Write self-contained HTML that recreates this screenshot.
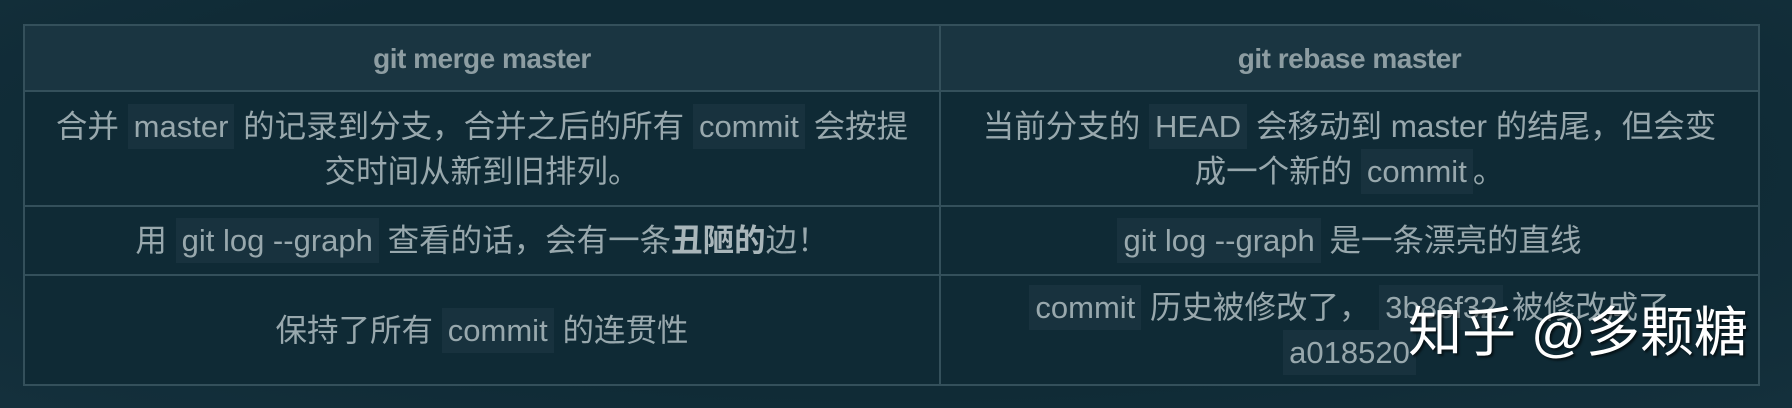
<!DOCTYPE html>
<html><head><meta charset="utf-8"><style>
html,body{margin:0;padding:0;}
body{width:1792px;height:408px;overflow:hidden;background:#102833;position:relative;
font-family:"Liberation Sans","Noto Sans CJK SC",sans-serif;color:#98a8ad;}
.bg{position:absolute;left:0;top:0;width:1792px;height:408px;
background:radial-gradient(ellipse at 50% 40%,#0f2a35 60%,#14303c 100%);}
table{position:absolute;left:23px;top:24px;border-collapse:collapse;table-layout:fixed;}
td,th{border:2px solid #34505b;text-align:center;padding:0 20px;font-size:31.5px;line-height:45px;}
th{background:#1a3541;height:64px;font-size:28px;font-weight:bold;color:#8d9da2;letter-spacing:-0.5px;}
td{background:#0f2a35;}
code{font-family:"Liberation Sans",sans-serif;background:#18323e;padding:5px 6px;font-size:31px;}
b{color:#a9b6ba;}
.wm{position:absolute;left:1408px;top:288px;font-size:54px;color:#fff;font-family:"Liberation Sans","Noto Sans CJK SC",sans-serif;font-weight:400;text-shadow:2px 2px 2px rgba(0,0,0,.6);white-space:nowrap;}
</style></head><body>
<div class="bg"></div>
<table>
<colgroup><col style="width:916px"><col style="width:819px"></colgroup>
<tr><th>git merge master</th><th>git rebase master</th></tr>
<tr style="height:115px"><td>合并 <code>master</code> 的记录到分支，合并之后的所有 <code>commit</code> 会按提<br>交时间从新到旧排列。</td>
<td>当前分支的 <code>HEAD</code> 会移动到 master 的结尾，但会变<br>成一个新的 <code>commit</code>。</td></tr>
<tr style="height:69px"><td>用 <code>git log --graph</code> 查看的话，会有一条<b>丑陋的</b>边！</td>
<td><code>git log --graph</code> 是一条漂亮的直线</td></tr>
<tr style="height:110px"><td>保持了所有 <code>commit</code> 的连贯性</td>
<td><code>commit</code> 历史被修改了， <code>3b86f32</code> 被修改成了<br><code>a018520</code></td></tr>
</table>
<div class="wm">知乎 @多颗糖</div>
</body></html>
